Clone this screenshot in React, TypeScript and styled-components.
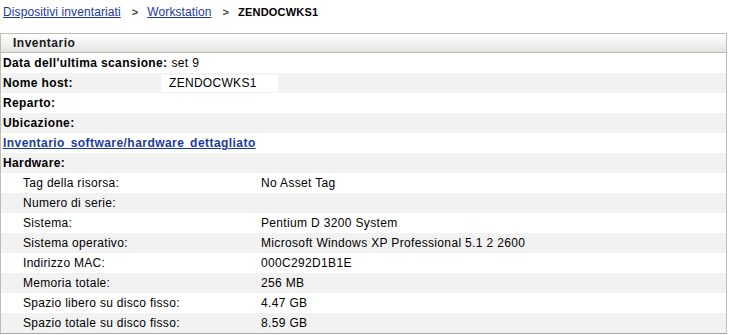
import styled, { createGlobalStyle } from 'styled-components';

const GlobalStyle = createGlobalStyle`
  body {
    margin: 0;
    background: #ffffff;
    font-family: 'Liberation Sans', Arial, sans-serif;
    font-size: 12px;
    color: #000000;
  }
`;

type HwItem = { label: string; value: string };

const hardware: HwItem[] = [
  { label: 'Tag della risorsa:', value: 'No Asset Tag' },
  { label: 'Numero di serie:', value: '' },
  { label: 'Sistema:', value: 'Pentium D 3200 System' },
  { label: 'Sistema operativo:', value: 'Microsoft Windows XP Professional 5.1 2 2600' },
  { label: 'Indirizzo MAC:', value: '000C292D1B1E' },
  { label: 'Memoria totale:', value: '256 MB' },
  { label: 'Spazio libero su disco fisso:', value: '4.47 GB' },
  { label: 'Spazio totale su disco fisso:', value: '8.59 GB' },
];

const App = () => {
  return (
    <Page>
      <GlobalStyle />
      <Breadcrumb>
        <CrumbLink href="#">Dispositivi inventariati</CrumbLink>
        <Separator>&gt;</Separator>
        <CrumbLink href="#">Workstation</CrumbLink>
        <Separator>&gt;</Separator>
        <Current>ZENDOCWKS1</Current>
      </Breadcrumb>

      <Panel>
        <PanelHeader>Inventario</PanelHeader>
        <Rows>
          <Row>
            <Label bold>Data dell'ultima scansione:</Label>
            <Value gap={4}>set 9</Value>
          </Row>
          <Row>
            <Label bold width={158}>
              Nome host:
            </Label>
            <HostBox>ZENDOCWKS1</HostBox>
          </Row>
          <Row>
            <Label bold>Reparto:</Label>
          </Row>
          <Row>
            <Label bold>Ubicazione:</Label>
          </Row>
          <Row>
            <DetailLink href="#">Inventario software/hardware dettagliato</DetailLink>
          </Row>
          <Row>
            <Label bold>Hardware:</Label>
          </Row>
          {hardware.map((item, index) => (
            <Row key={index} indent={22}>
              <Label width={238}>{item.label}</Label>
              <Value>{item.value}</Value>
            </Row>
          ))}
        </Rows>
      </Panel>
    </Page>
  );
};

export default App;

const Page = styled.div`
  width: 730px;
  height: 335px;
  overflow: hidden;
`;

const Breadcrumb = styled.div`
  display: flex;
  align-items: center;
  height: 24px;
  padding: 0 0 0 3px;
  margin-bottom: 9px;
  line-height: 16px;
  letter-spacing: 0.1px;
`;

const CrumbLink = styled.a`
  color: #1c3a9e;
  text-decoration: underline;
`;

const Separator = styled.span`
  margin: 0 9px 0 11px;
  font-weight: bold;
  font-size: 11px;
  color: #444444;
`;

const Current = styled.span`
  font-weight: bold;
  font-size: 11px;
  letter-spacing: 0.2px;
  color: #000000;
`;

const Panel = styled.div`
  width: 725px;
  border: 1px solid #bcbcb8;
  border-bottom-color: #a8a8a4;
`;

const PanelHeader = styled.div`
  height: 18px;
  line-height: 18px;
  padding-left: 12px;
  font-weight: bold;
  letter-spacing: 0.5px;
  color: #1a1a1a;
  background: linear-gradient(#ffffff, #e2e4e0);
  border-bottom: 1px solid #bcbcb8;
`;

const Rows = styled.div`
  display: flex;
  flex-direction: column;
`;

const Row = styled.div<{ indent?: number }>`
  display: flex;
  align-items: center;
  height: 20px;
  padding-left: ${({ indent }) => (indent ? `${indent}px` : '2px')};
  background: #ffffff;

  &:nth-child(even) {
    background: #f2f2f2;
  }
`;

const Label = styled.span<{ bold?: boolean; width?: number }>`
  flex: none;
  width: ${({ width }) => (width ? `${width}px` : 'auto')};
  font-weight: ${({ bold }) => (bold ? 'bold' : 'normal')};
  letter-spacing: ${({ bold }) => (bold ? '0.38px' : '0.3px')};
  white-space: nowrap;
`;

const Value = styled.span<{ gap?: number }>`
  margin-left: ${({ gap }) => (gap ? `${gap}px` : '0')};
  letter-spacing: 0.34px;
  white-space: nowrap;
`;

const HostBox = styled.span`
  display: flex;
  align-items: center;
  height: 17px;
  width: 109px;
  padding-left: 8px;
  letter-spacing: 0.3px;
  background: #ffffff;
`;

const DetailLink = styled.a`
  color: #1c3a9e;
  font-weight: bold;
  letter-spacing: 0.45px;
  word-spacing: 2px;
  text-decoration: underline;
`;
